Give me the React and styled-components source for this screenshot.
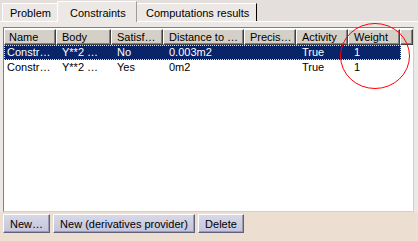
import React from "react";
import styled, { createGlobalStyle } from "styled-components";

const GlobalStyle = createGlobalStyle`
  html, body { margin: 0; padding: 0; background: #ece8e5; }
  body { font-family: "Liberation Sans", Arial, sans-serif; font-size: 11px; }
`;

const columns = [
  { key: "name", title: "Name", width: 52 },
  { key: "body", title: "Body", width: 55 },
  { key: "sat", title: "Satisf…", width: 52 },
  { key: "dist", title: "Distance to …", width: 81 },
  { key: "prec", title: "Precis…", width: 52 },
  { key: "act", title: "Activity", width: 52 },
  { key: "weight", title: "Weight", width: 52 },
];

const rows = [
  { name: "Constr…", body: "Y**2 …", sat: "No", dist: "0.003m2", prec: "", act: "True", weight: "1", selected: true },
  { name: "Constr…", body: "Y**2 …", sat: "Yes", dist: "0m2", prec: "", act: "True", weight: "1" },
];

const Window = styled.div`
  position: relative;
  width: 418px;
  height: 241px;
  display: flex;
  flex-direction: column;
  overflow: hidden;
  background: #ece8e5;
`;

const TabBar = styled.div`
  display: flex;
  align-items: flex-end;
  height: 21px;
  padding-left: 2px;
  background: #e4dfdc;
  border-bottom: 1px solid #ffffff;
`;

const Tab = styled.div`
  position: relative;
  box-sizing: border-box;
  flex: 0 0 ${(p) => p.$w}px;
  height: ${(p) => (p.$active ? "21px" : "18px")};
  padding: ${(p) => (p.$active ? "5px 0 0 12px" : `3px 0 0 ${p.$pl}px`)};
  margin: ${(p) => (p.$active ? "0 -1px -1px -1px" : "0")};
  background: #ece8e5;
  border-top: 1px solid #ffffff;
  border-left: 1px solid #ffffff;
  border-right: 1px solid ${(p) => (p.$dark ? "#000000" : "#a09c99")};
  border-top-left-radius: 2px;
  color: #000;
  white-space: nowrap;
  z-index: ${(p) => (p.$active ? 2 : 1)};
`;

const Panel = styled.div`
  padding: 5px 4px 0 3px;
`;

const List = styled.div`
  box-sizing: border-box;
  height: 185px;
  background: #ffffff;
  border-top: 1px solid #808080;
  border-left: 1px solid #808080;
  border-right: 1px solid #d4d0c8;
  border-bottom: 1px solid #d4d0c8;
  padding-top: 1px;
`;

const HeaderRow = styled.div`
  display: flex;
  height: 16px;
`;

const HeaderCell = styled.div`
  box-sizing: border-box;
  flex: 0 0 ${(p) => p.$w}px;
  height: 16px;
  background: #d4d0c8;
  border-top: 1px solid #ffffff;
  border-left: 1px solid #ffffff;
  border-right: 1px solid #404040;
  border-bottom: 1px solid #404040;
  box-shadow: inset -1px -1px 0 #808080;
  padding: 1px 0 0 ${(p) => p.$pl ?? 5}px;
  line-height: 13px;
  white-space: nowrap;
  overflow: hidden;
`;

const Filler = styled(HeaderCell)`
  flex: 0 0 13px;
`;

const Row = styled.div`
  box-sizing: border-box;
  display: flex;
  width: 397px;
  height: 15px;
  background: ${(p) => (p.$selected ? "#0a246a" : "transparent")};
  color: ${(p) => (p.$selected ? "#ffffff" : "#000000")};
  border: 1px dotted ${(p) => (p.$selected ? "#e8e0a0" : "transparent")};
`;

const Cell = styled.div`
  box-sizing: border-box;
  flex: 0 0 ${(p) => p.$w}px;
  padding-left: ${(p) => p.$pl}px;
  line-height: 13px;
  white-space: nowrap;
  overflow: hidden;
`;

const ButtonBar = styled.div`
  flex: 1;
  display: flex;
  gap: 3px;
  padding: 2px 3px 0 3px;
  background: #ecdfd1;
`;

const Button = styled.button`
  box-sizing: border-box;
  width: ${(p) => p.$w}px;
  height: 19px;
  padding: 0;
  font-family: "Liberation Sans", Arial, sans-serif;
  font-size: 11px;
  color: #000;
  background: linear-gradient(#d8d8e8, #c4c4dc);
  border: none;
  border-top: 1px solid #ffffff;
  border-left: 1px solid #ffffff;
  border-right: 1px solid #606078;
  border-bottom: 1px solid #606078;
  box-shadow: inset -1px -1px 0 #9a9ab4;
  border-radius: 0;
`;

const Circle = styled.svg`
  position: absolute;
  left: 339px;
  top: 22px;
  pointer-events: none;
`;

export default function App() {
  return (
    <>
      <GlobalStyle />
      <Window>
        <TabBar>
          <Tab $w={56} $pl={7}>Problem</Tab>
          <Tab $w={80} $active>Constraints</Tab>
          <Tab $w={121} $pl={9} $dark>Computations results</Tab>
        </TabBar>
        <Panel>
          <List>
            <HeaderRow>
              {columns.map((c, j) => (
                <HeaderCell key={c.key} $w={c.width} $pl={j === 0 ? 4 : 5}>
                  {c.title}
                </HeaderCell>
              ))}
              <Filler $w={13} />
            </HeaderRow>
            {rows.map((r, i) => (
              <Row key={i} $selected={r.selected}>
                {columns.map((c, j) => (
                  <Cell key={c.key} $w={j === 0 ? c.width - 1 : c.width} $pl={j === 0 ? 2 : 6}>
                    {r[c.key]}
                  </Cell>
                ))}
              </Row>
            ))}
          </List>
        </Panel>
        <ButtonBar>
          <Button $w={47}>New…</Button>
          <Button $w={142}>New (derivatives provider)</Button>
          <Button $w={46}>Delete</Button>
        </ButtonBar>
        <Circle width="72" height="68" viewBox="0 0 72 68">
          <ellipse cx="36" cy="34" rx="34.5" ry="32.5" fill="none" stroke="#ff0000" strokeWidth="1" />
        </Circle>
      </Window>
    </>
  );
}
